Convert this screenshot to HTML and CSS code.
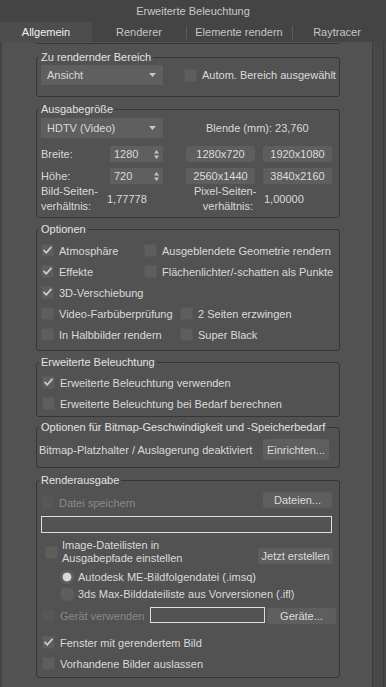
FILE: index.html
```html
<!DOCTYPE html>
<html lang="de">
<head>
<meta charset="utf-8">
<title>Erweiterte Beleuchtung</title>
<link rel="stylesheet" href="styles.css">
</head>
<body>
<div class="window">
  <div class="titlebar">Erweiterte Beleuchtung</div>
  <div class="tabs">
    <div class="tab t1 active">Allgemein</div>
    <div class="tab t2">Renderer</div>
    <div class="tab t3 sep">Elemente rendern</div>
    <div class="tab t4 sep">Raytracer</div>
  </div>
  <div class="main">
    <div class="panel">
      <div class="prev-group"></div>

      <fieldset class="grp g1">
        <legend>Zu rendernder Bereich</legend>
        <div class="row h20">
          <div class="select"><span>Ansicht</span><svg class="arr" width="7" height="4" viewBox="0 0 7 4"><path d="M0 0H7L3.5 4Z"/></svg></div>
          <div class="chk ml21"><span class="cb"></span>Autom. Bereich ausgewählt</div>
        </div>
      </fieldset>

      <fieldset class="grp g2">
        <legend>Ausgabegröße</legend>
        <div class="row h20">
          <div class="select"><span>HDTV (Video)</span><svg class="arr" width="7" height="4" viewBox="0 0 7 4"><path d="M0 0H7L3.5 4Z"/></svg></div>
          <div class="blende">Blende (mm): 23,760</div>
        </div>
        <div class="row h16 mt8">
          <div class="lbl w69">Breite:</div>
          <div class="spin"><span>1280</span><svg width="5" height="9" viewBox="0 0 5 9"><path d="M0 3.5L2.5 0 5 3.5Z M0 5.5L2.5 9 5 5.5Z"/></svg></div>
          <div class="btn ml23">1280x720</div>
          <div class="btn ml8">1920x1080</div>
        </div>
        <div class="row h16 mt6">
          <div class="lbl w69">Höhe:</div>
          <div class="spin"><span>720</span><svg width="5" height="9" viewBox="0 0 5 9"><path d="M0 3.5L2.5 0 5 3.5Z M0 5.5L2.5 9 5 5.5Z"/></svg></div>
          <div class="btn ml23">2560x1440</div>
          <div class="btn ml8">3840x2160</div>
        </div>
        <div class="row aspect">
          <div class="two w66">Bild-Seiten-<br>verhältnis:</div>
          <div class="val w87">1,77778</div>
          <div class="two right w59">Pixel-Seiten-<br>verhältnis:</div>
          <div class="val ml11">1,00000</div>
        </div>
      </fieldset>

      <fieldset class="grp g3">
        <legend>Optionen</legend>
        <div class="row h21">
          <div class="chk w103"><span class="cb on"><svg viewBox="0 0 13 13"><path d="M2.5 6.5L5 9.2 10.5 3"/></svg></span>Atmosphäre</div>
          <div class="chk"><span class="cb"></span>Ausgeblendete Geometrie rendern</div>
        </div>
        <div class="row h21">
          <div class="chk w103"><span class="cb on"><svg viewBox="0 0 13 13"><path d="M2.5 6.5L5 9.2 10.5 3"/></svg></span>Effekte</div>
          <div class="chk"><span class="cb"></span>Flächenlichter/-schatten als Punkte</div>
        </div>
        <div class="row h21">
          <div class="chk"><span class="cb on"><svg viewBox="0 0 13 13"><path d="M2.5 6.5L5 9.2 10.5 3"/></svg></span>3D-Verschiebung</div>
        </div>
        <div class="row h21">
          <div class="chk w139"><span class="cb"></span>Video-Farbüberprüfung</div>
          <div class="chk"><span class="cb"></span>2 Seiten erzwingen</div>
        </div>
        <div class="row h21">
          <div class="chk w139"><span class="cb"></span>In Halbbilder rendern</div>
          <div class="chk"><span class="cb"></span>Super Black</div>
        </div>
      </fieldset>

      <fieldset class="grp g4">
        <legend>Erweiterte Beleuchtung</legend>
        <div class="row h21">
          <div class="chk ml1"><span class="cb on"><svg viewBox="0 0 13 13"><path d="M2.5 6.5L5 9.2 10.5 3"/></svg></span>Erweiterte Beleuchtung verwenden</div>
        </div>
        <div class="row h21">
          <div class="chk ml1"><span class="cb"></span>Erweiterte Beleuchtung bei Bedarf berechnen</div>
        </div>
      </fieldset>

      <fieldset class="grp g5">
        <legend>Optionen für Bitmap-Geschwindigkeit und -Speicherbedarf</legend>
        <div class="row h21">
          <div class="lbl mlm2">Bitmap-Platzhalter / Auslagerung deaktiviert</div>
          <div class="btn big push mr4">Einrichten...</div>
        </div>
      </fieldset>

      <fieldset class="grp g6">
        <legend>Renderausgabe</legend>
        <div class="row h17 bottom">
          <div class="chk dis"><span class="cb"></span>Datei speichern</div>
          <div class="btn push mr1 top">Dateien...</div>
        </div>
        <div class="field wide mt7"></div>
        <div class="row h26 mt6">
          <div class="chk ml4 gap4"><span class="cb"></span><span class="two">Image-Dateilisten in<br>Ausgabepfade einstellen</span></div>
          <div class="btn w75 push top mt9">Jetzt erstellen</div>
        </div>
        <div class="row h17 mt3">
          <div class="rad ml19"><span class="radio on"></span>Autodesk ME-Bildfolgendatei (.imsq)</div>
        </div>
        <div class="row h17">
          <div class="rad ml19"><span class="radio"></span>3ds Max-Bilddateiliste aus Vorversionen (.ifl)</div>
        </div>
        <div class="row h17 mt5 top">
          <div class="chk dis ml1 w108 self-c"><span class="cb"></span>Gerät verwenden</div>
          <div class="field small"></div>
          <div class="btn ml2 mt1 mrm3">Geräte...</div>
        </div>
        <div class="row h21 mt8">
          <div class="chk ml1"><span class="cb on"><svg viewBox="0 0 13 13"><path d="M2.5 6.5L5 9.2 10.5 3"/></svg></span>Fenster mit gerendertem Bild</div>
        </div>
        <div class="row h21">
          <div class="chk ml1"><span class="cb"></span>Vorhandene Bilder auslassen</div>
        </div>
      </fieldset>
    </div>
    <div class="scroll"><div class="track"></div></div>
  </div>
</div>
</body>
</html>
```

FILE: styles.css
```css
* { box-sizing: border-box; }
html, body { margin: 0; padding: 0; }
body {
  width: 386px;
  height: 687px;
  overflow: hidden;
  background: #444444;
  font-family: "Liberation Sans", Arial, sans-serif;
  font-size: 11px;
  color: #dadada;
}
.window { display: flex; flex-direction: column; height: 687px; }
.titlebar {
  height: 22px;
  display: flex;
  align-items: center;
  justify-content: center;
  color: #c9c9c9;
  background: #444444;
}
.tabs { display: flex; height: 20px; background: #444444; }
.tab { display: flex; align-items: center; justify-content: center; color: #c6c6c6; }
.tab.active { background: #4d4d4d; color: #f2f2f2; }
.t1 { width: 92px; }
.t2 { width: 94px; }
.t3 { width: 106px; }
.t4 { width: 90px; }
.tab.sep { background: linear-gradient(#5c5c5c, #5c5c5c) left center / 1px 13px no-repeat; }

.main { flex: 1; display: flex; padding-left: 2px; }
.panel {
  width: 370px;
  background: #525252;
  display: flex;
  flex-direction: column;
}
.scroll {
  flex: 1;
  display: flex;
  border-left: 1px solid #3b3b3b;
  background: #474747;
  padding-right: 2px;
}
.track { flex: 1; border-right: 1px solid #3b3b3b; }

.prev-group {
  height: 2px;
  margin: 0 32px 0 34px;
  border: 1px solid #363636;
  border-top: none;
  border-radius: 0 0 3px 3px;
}

.grp {
  margin: 0 32px 0 34px;
  padding: 0 6px 0 4px;
  border: 1px solid #363636;
  border-radius: 3px;
  min-width: 0;
  display: flex;
  flex-direction: column;
}
.grp legend {
  padding: 0 2px;
  margin-left: -2px;
  height: 14px;
  line-height: 14px;
  color: #e2e2e2;
}
.g1 { margin-top: 6px; padding-top: 1px; padding-bottom: 11px; }
.g2 { margin-top: 5px; padding-top: 2px; padding-bottom: 3px; }
.g3 { margin-top: 4px; padding-top: 4px; padding-bottom: 5px; }
.g4 { margin-top: 4px; padding-top: 3px; padding-bottom: 2px; }
.g5 { margin-top: 3px; padding-top: 5px; padding-bottom: 7px; }
.g6 { margin-top: 5px; padding-top: 5px; padding-bottom: 3px; }

.row { display: flex; align-items: center; flex-shrink: 0; }
.row.bottom { align-items: flex-end; }
.row.top { align-items: flex-start; }
.h16 { height: 16px; }
.h17 { height: 17px; }
.h20 { height: 20px; }
.h21 { height: 21px; }
.h26 { height: 26px; }
.mt1 { margin-top: 1px; }
.mt3 { margin-top: 3px; }
.mt5 { margin-top: 5px; }
.mt6 { margin-top: 6px; }
.mt7 { margin-top: 7px; }
.mt8 { margin-top: 8px; }
.mt9 { margin-top: 9px; }
.ml1 { margin-left: 1px; }
.ml2 { margin-left: 2px; }
.ml4 { margin-left: 4px; }
.ml8 { margin-left: 8px; }
.ml11 { margin-left: 11px; }
.ml19 { margin-left: 19px; }
.ml21 { margin-left: 21px; }
.ml23 { margin-left: 23px; }
.mlm2 { margin-left: -2px; }
.mr1 { margin-right: 1px; }
.mr4 { margin-right: 4px; }
.mrm3 { margin-right: -3px; }
.w59 { width: 59px; flex-shrink: 0; }
.w66 { width: 66px; flex-shrink: 0; }
.w69 { width: 69px; flex-shrink: 0; }
.w87 { width: 87px; flex-shrink: 0; }
.w103 { width: 103px; flex-shrink: 0; }
.w108 { width: 108px; flex-shrink: 0; }
.w139 { width: 139px; flex-shrink: 0; }
.push { margin-left: auto; }
.top { align-self: flex-start; }
.self-c { align-self: center; }

.select {
  width: 122px;
  height: 20px;
  background: #5f5f5f;
  display: flex;
  align-items: center;
  justify-content: space-between;
  padding: 0 7px 0 6px;
  flex-shrink: 0;
}
.arr { fill: #c8c8c8; }
.blende { margin-left: 43px; white-space: nowrap; }

.spin {
  width: 53px;
  height: 16px;
  background: #5f5f5f;
  display: flex;
  align-items: center;
  justify-content: space-between;
  padding: 0 4px 0 4px;
  flex-shrink: 0;
}
.spin svg { fill: #c4c4c4; }

.btn {
  width: 69px;
  height: 16px;
  background: #5e5e5e;
  border-radius: 3px;
  display: flex;
  align-items: center;
  justify-content: center;
  flex-shrink: 0;
  white-space: nowrap;
  color: #dcdcdc;
}
.btn.big { width: 66px; height: 21px; }
.w75 { width: 75px; }

.aspect { height: 30px; }
.two { line-height: 15px; white-space: nowrap; }
.two.right { text-align: right; }
.chk .two { line-height: 13px; }

.chk, .rad { display: flex; align-items: center; white-space: nowrap; }
.cb {
  width: 13px;
  height: 13px;
  background: #5e5e5e;
  border: 1px solid #575757;
  margin-right: 5px;
  flex-shrink: 0;
  display: flex;
}
.gap4 .cb { margin-right: 4px; }
.cb svg { width: 11px; height: 11px; margin: 0; }
.cb svg path { fill: none; stroke: #cfcfcf; stroke-width: 2; stroke-linecap: square; }
.cb.on { }
.dis { color: #8a8a8a; }
.dis .cb { background: #575757; border-color: #525252; }

.radio {
  width: 14px;
  height: 14px;
  border-radius: 50%;
  background: #5e5e5e;
  margin-right: 4px;
  flex-shrink: 0;
}
.radio.on { background: radial-gradient(circle, #d8d8d8 0 4px, #5e5e5e 4.8px); }

.field {
  border: 1px solid #dedede;
  background: transparent;
  flex-shrink: 0;
}
.field.wide { width: 291px; height: 17px; }
.field.small { width: 115px; height: 16px; }
```
